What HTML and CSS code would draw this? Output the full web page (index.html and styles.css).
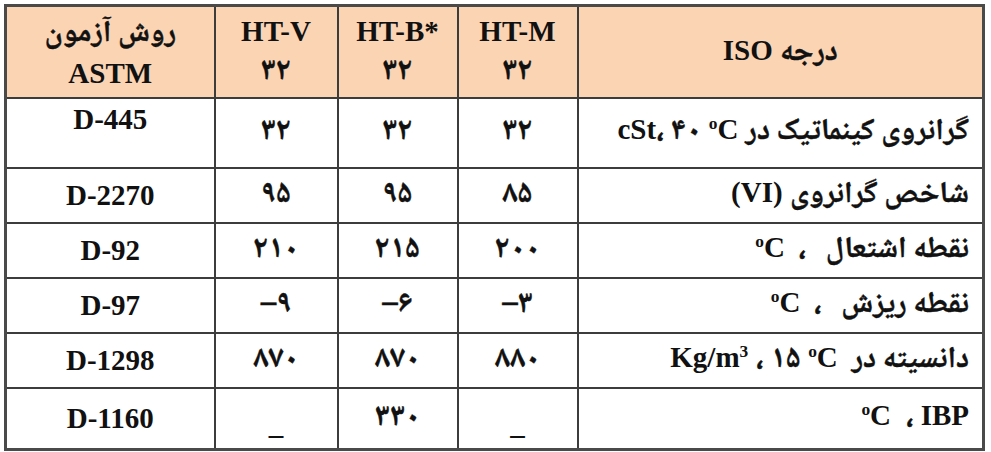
FILE: index.html
```html
<!DOCTYPE html>
<html lang="fa">
<head>
<meta charset="utf-8">
<title>مشخصات روغن HT</title>
<link rel="stylesheet" href="styles.css">
</head>
<body>
<div class="page">
<table class="spec">
  <colgroup>
    <col class="c-astm">
    <col class="c-val c-v">
    <col class="c-val c-b">
    <col class="c-val c-m">
    <col class="c-prop">
  </colgroup>
  <thead>
    <tr class="r-head">
      <th class="h-astm"><span class="fa">روش آزمون</span><br>ASTM</th>
      <th class="h-val">HT-V<br><span class="num">۳۲</span></th>
      <th class="h-val">HT-B*<br><span class="num">۳۲</span></th>
      <th class="h-val">HT-M<br><span class="num">۳۲</span></th>
      <th class="h-prop" dir="rtl"><span class="fa">درجه</span> <span class="ltr">ISO</span></th>
    </tr>
  </thead>
  <tbody>
    <tr class="r1">
      <td class="astm top">D-445</td>
      <td class="val"><span class="num">۳۲</span></td>
      <td class="val"><span class="num">۳۲</span></td>
      <td class="val"><span class="num">۳۲</span></td>
      <td class="prop" dir="rtl"><span class="fa">گرانروی کینماتیک در</span> <span class="ltr"><sup>o</sup>C</span> <span class="ltr num">۴۰</span> <span class="fa">،</span><span class="ltr">cSt</span></td>
    </tr>
    <tr class="r2">
      <td class="astm">D-2270</td>
      <td class="val"><span class="num">۹۵</span></td>
      <td class="val"><span class="num">۹۵</span></td>
      <td class="val"><span class="num">۸۵</span></td>
      <td class="prop" dir="rtl"><span class="fa">شاخص گرانروی</span> <span class="ltr">(VI)</span></td>
    </tr>
    <tr class="r3">
      <td class="astm">D-92</td>
      <td class="val"><span class="num">۲۱۰</span></td>
      <td class="val"><span class="num">۲۱۵</span></td>
      <td class="val"><span class="num">۲۰۰</span></td>
      <td class="prop" dir="rtl"><span class="fa">نقطه اشتعال&nbsp;&nbsp; ،&nbsp;&nbsp;</span><span class="ltr"><sup>o</sup>C</span></td>
    </tr>
    <tr class="r4">
      <td class="astm">D-97</td>
      <td class="val"><span class="num">–۹</span></td>
      <td class="val"><span class="num">–۶</span></td>
      <td class="val"><span class="num">–۳</span></td>
      <td class="prop" dir="rtl"><span class="fa">نقطه ریزش&nbsp;&nbsp; ،&nbsp;&nbsp;</span><span class="ltr"><sup>o</sup>C</span></td>
    </tr>
    <tr class="r5">
      <td class="astm">D-1298</td>
      <td class="val"><span class="num">۸۷۰</span></td>
      <td class="val"><span class="num">۸۷۰</span></td>
      <td class="val"><span class="num">۸۸۰</span></td>
      <td class="prop" dir="rtl"><span class="fa">دانسیته در&nbsp;</span> <span class="ltr"><sup>o</sup>C</span> <span class="ltr num">۱۵</span> <span class="fa">،</span> <span class="ltr">Kg/m<sup class="pow">3</sup></span></td>
    </tr>
    <tr class="r6">
      <td class="astm">D-1160</td>
      <td class="val dash">_</td>
      <td class="val"><span class="num">۳۳۰</span></td>
      <td class="val dash">_</td>
      <td class="prop" dir="rtl"><span class="ltr">IBP</span> <span class="fa">،</span>&nbsp;&nbsp;<span class="ltr"><sup>o</sup>C</span></td>
    </tr>
  </tbody>
</table>
</div>
</body>
</html>
```
FILE: styles.css
```css
html, body {
  margin: 0;
  padding: 0;
  background: #ffffff;
}

.page {
  padding: 4px 0 0 4px;
}

.spec {
  border-collapse: collapse;
  table-layout: fixed;
  width: 981px;
  border: 3px solid #4a4a4a;
  font-family: "Liberation Serif", "Noto Naskh Arabic", "Noto Sans Arabic", "DejaVu Sans", serif;
  font-weight: bold;
  font-size: 29px;
  color: #111111;
}

.c-astm { width: 209px; }
.c-v { width: 123px; }
.c-b { width: 120px; }
.c-m { width: 120px; }
.c-prop { width: 406px; }

.spec th,
.spec td {
  border: 2px solid #3c3c3c;
  padding: 0;
  text-align: center;
  vertical-align: middle;
}

.spec thead th {
  background: #fbd4b4;
  line-height: 38px;
  font-weight: bold;
}

.r-head { height: 92px; }
.r1 { height: 70px; }
.r2 { height: 54px; }
.r3 { height: 54px; }
.r4 { height: 55px; }
.r5 { height: 55px; }
.r6 { height: 62px; }

.fa {
  font-family: "Noto Naskh Arabic", "Noto Sans Arabic", "DejaVu Sans", sans-serif;
  font-size: 30px;
  font-weight: 800;
  -webkit-text-stroke: 0.4px #111111;
}

.num {
  font-family: "Noto Naskh Arabic", "Noto Sans Arabic", "DejaVu Sans", sans-serif;
  font-size: 31px;
  font-weight: 800;
  -webkit-text-stroke: 0.4px #111111;
}

.ltr {
  direction: ltr;
  unicode-bidi: isolate;
}

sup {
  font-size: 0.6em;
  vertical-align: 0.55em;
  line-height: 0;
}

.spec td.top {
  vertical-align: top;
  padding-top: 4px;
}

.spec td.prop {
  text-align: right;
  padding-right: 13px;
}

.spec th.h-prop {
  text-align: center;
}

.spec td.dash {
  vertical-align: middle;
  padding-top: 12px;
}
```
